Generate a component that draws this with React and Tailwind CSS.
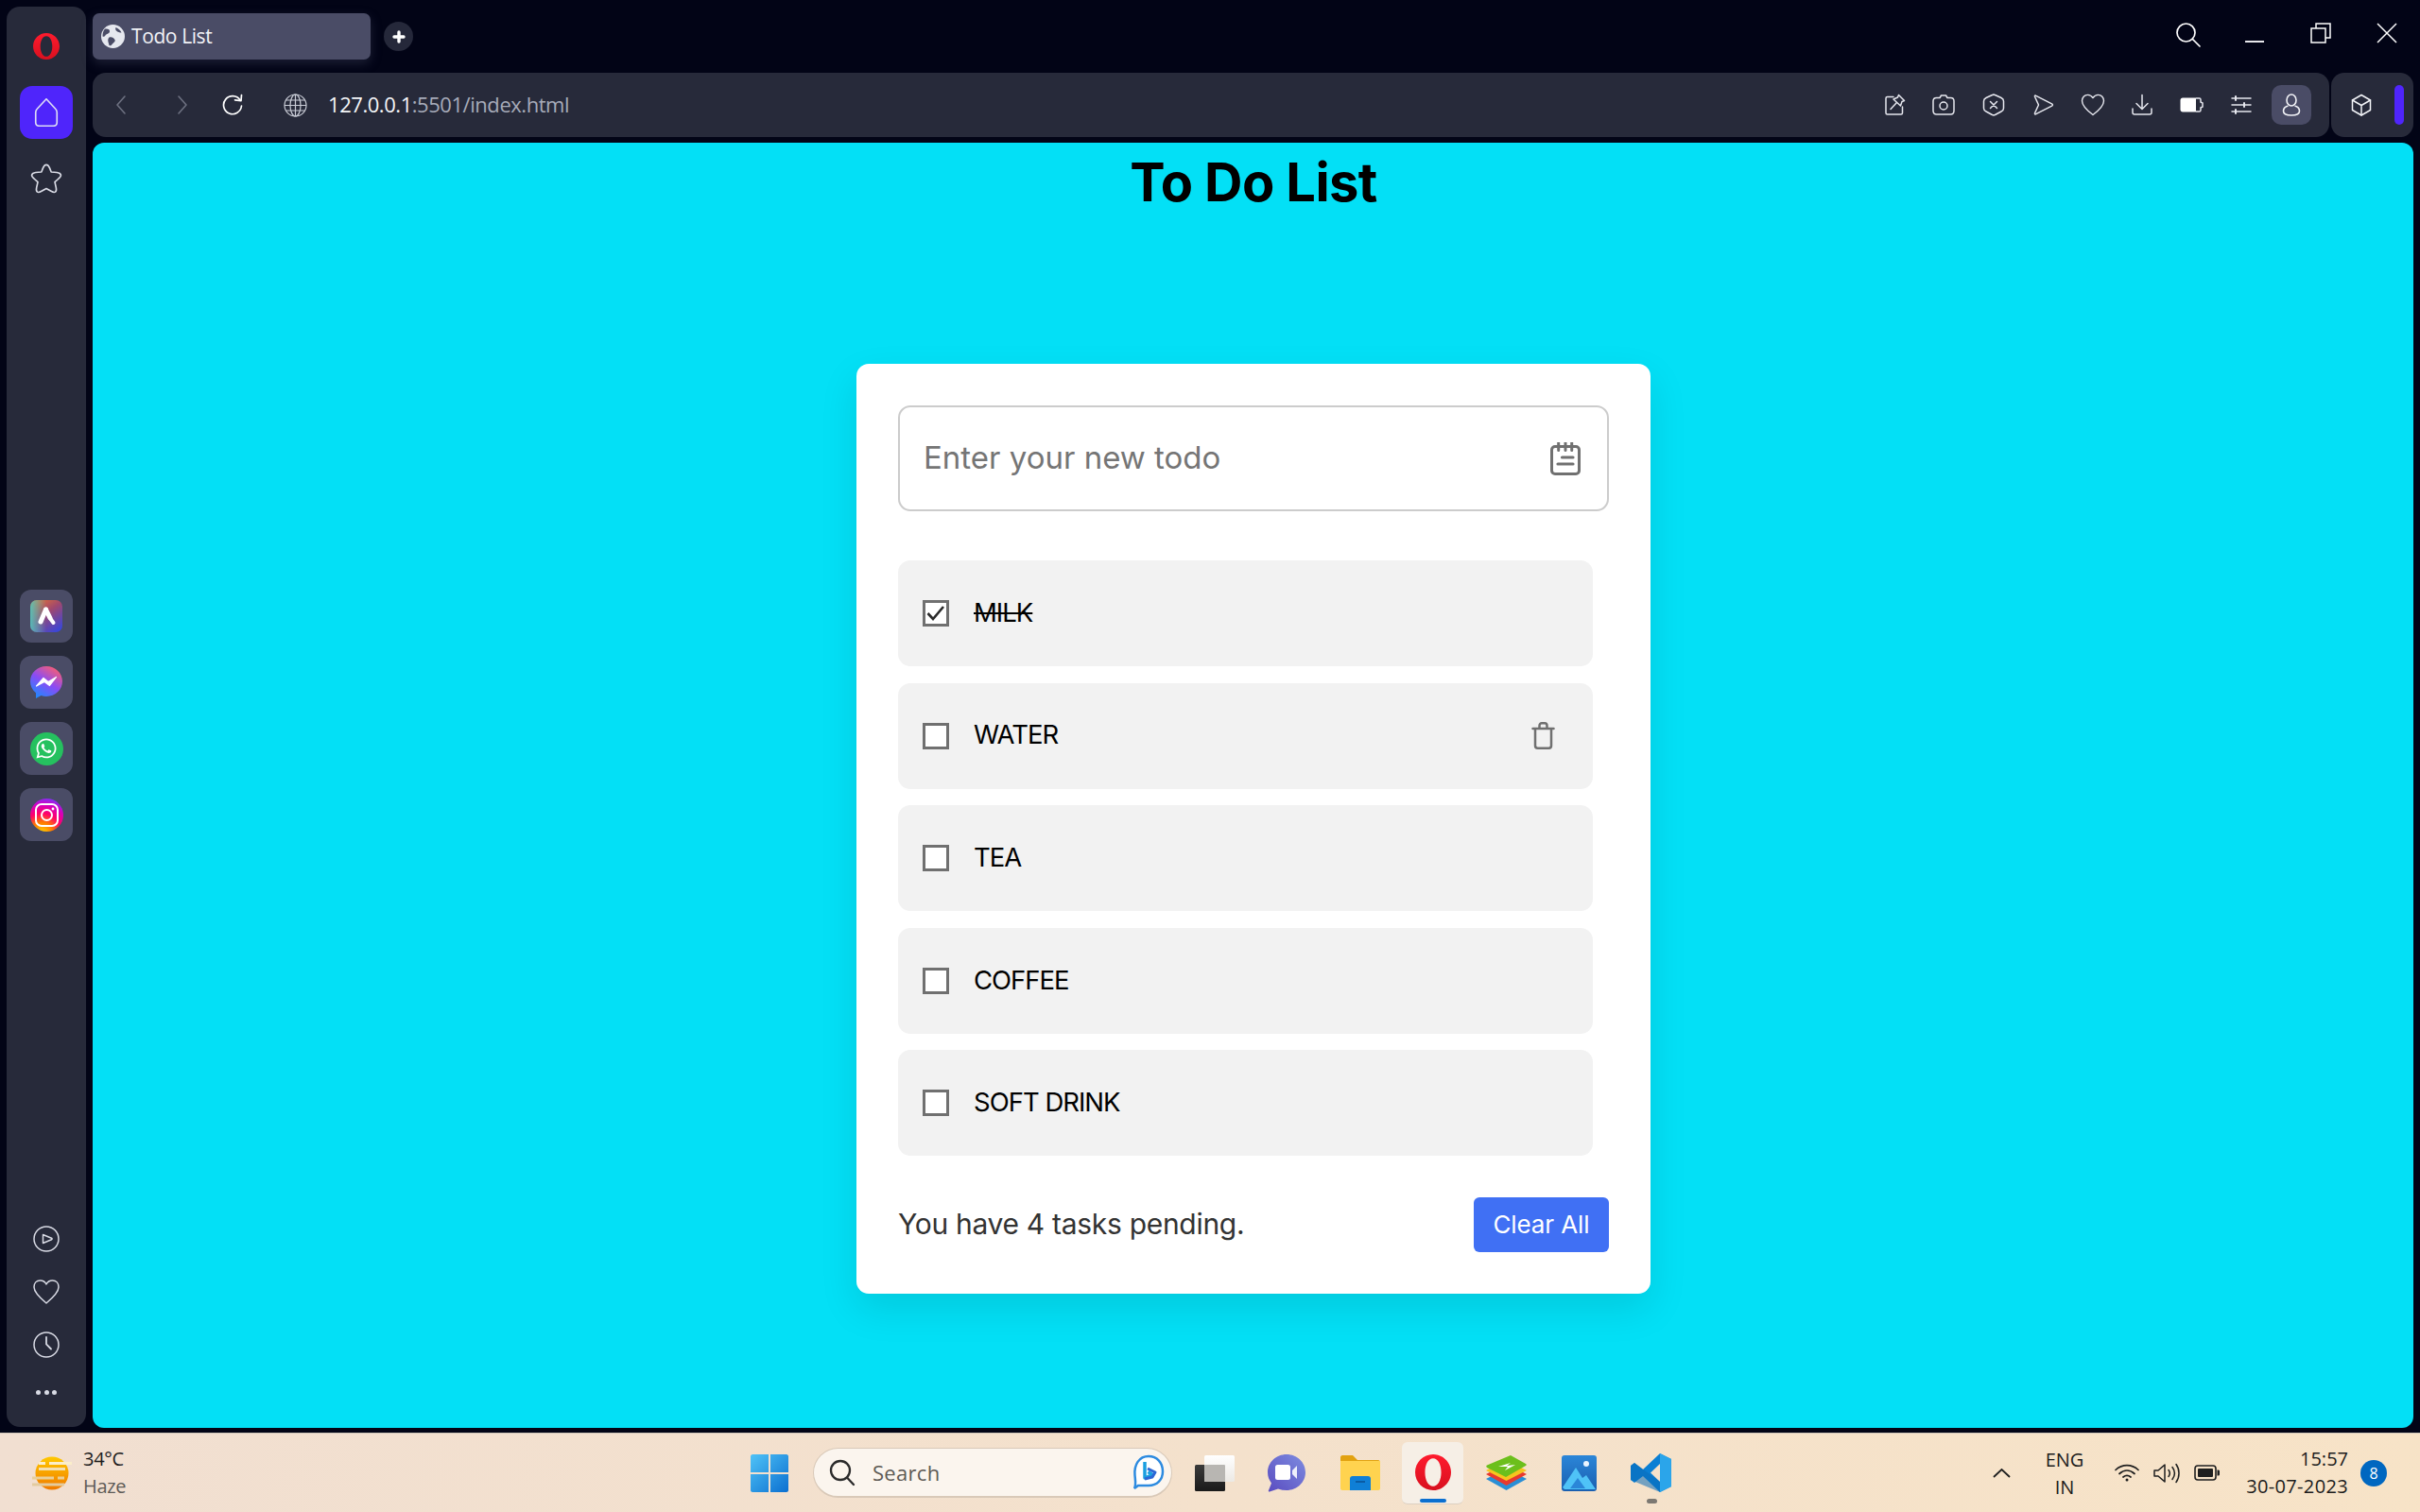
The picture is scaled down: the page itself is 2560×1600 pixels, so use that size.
import React from "react";
import { FaWhatsapp } from "react-icons/fa";

const UI = "font-['Open_Sans','Noto_Sans',sans-serif]";
const POP = "font-['Inter','Liberation_Sans',sans-serif]";

function Ic({ size = 24, w, h, vb = "0 0 24 24", sw = 1.6, color = "currentColor", fill = "none", children, className = "" }) {
  return (
    <svg width={w ?? size} height={h ?? size} viewBox={vb} fill={fill} stroke={color} strokeWidth={sw} strokeLinecap="round" strokeLinejoin="round" className={"block shrink-0 " + className}>
      {children}
    </svg>
  );
}

function OperaLogo({ w = 28, h = 28 }) {
  return (
    <svg width={w} height={h} viewBox="0 0 40 40" className="block shrink-0">
      <defs>
        <linearGradient id={`op${w}`} x1="0" y1="0" x2="0" y2="1">
          <stop offset="0" stopColor="#ff1b2d" />
          <stop offset="1" stopColor="#d8101f" />
        </linearGradient>
      </defs>
      <path fillRule="evenodd" fill={`url(#op${w})`} d="M20 0C31 0 40 9 40 20S31 40 20 40 0 31 0 20 9 0 20 0ZM20 4.500C14.500 4.500 11 11.500 11 20S14.500 35.500 20 35.500 29 28.500 29 20 25.500 4.500 20 4.500Z" />
    </svg>
  );
}

function SideTile({ children }) {
  return <div className="w-[56px] h-[56px] rounded-[12px] bg-[#4a4c66] flex items-center justify-center">{children}</div>;
}

function Sidebar() {
  return (
    <aside className="w-[84px] h-[1503px] mt-[7px] ml-[7px] shrink-0 rounded-[14px] bg-[#272a3a] flex flex-col items-center text-[#d8dae4]">
      <div className="mt-[28px]"><OperaLogo /></div>
      <div className="mt-[28px] w-[56px] h-[56px] rounded-[13px] bg-[#4f25fb] flex items-center justify-center">
        <Ic w={26} h={30} vb="4 2 16 20" sw={1.1} color="#dcdcf5">
          <path d="M12 2.500 18.500 9.500C19.300 10.300 19.500 11 19.500 12V19C19.500 20.700 18.700 21.500 17 21.500H7C5.300 21.500 4.500 20.700 4.500 19V12C4.500 11 4.700 10.300 5.500 9.500Z" />
        </Ic>
      </div>
      <div className="mt-[22px]">
        <Ic size={40} sw={1}>
          <path d="M12 3.200C13 3.200 13.600 4 14.200 5.500L15.100 7.800 18.700 8.100C20.300 8.300 21 8.800 21.200 9.600 21.400 10.400 20.900 11.100 19.800 12L17.400 14.200 18.200 17.800C18.500 19.200 18.400 20 17.700 20.500 17 21 16.200 20.700 15 20L12 18.300 9 20C7.800 20.700 7 21 6.300 20.500 5.600 20 5.500 19.200 5.800 17.800L6.600 14.200 4.200 12C3.100 11.100 2.600 10.400 2.800 9.600 3 8.800 3.700 8.300 5.300 8.100L8.900 7.800 9.800 5.500C10.400 4 11 3.200 12 3.200Z" />
        </Ic>
      </div>

      <div className="mt-[415px] flex flex-col gap-[14px]">
        <SideTile>
          <svg width="34" height="34" viewBox="0 0 34 34" className="block">
            <defs>
              <linearGradient id="ariaA" x1="0.1" y1="0" x2="0.8" y2="1">
                <stop offset="0" stopColor="#e8762f" />
                <stop offset="0.45" stopColor="#a0486e" />
                <stop offset="1" stopColor="#3a46d8" />
              </linearGradient>
              <linearGradient id="ariaB" x1="0" y1="0" x2="1" y2="0">
                <stop offset="0" stopColor="#4fc6c0" stopOpacity="0.9" />
                <stop offset="0.5" stopColor="#4fc6c0" stopOpacity="0" />
              </linearGradient>
            </defs>
            <rect width="34" height="34" rx="7" fill="url(#ariaA)" />
            <rect width="34" height="34" rx="7" fill="url(#ariaB)" />
            <path d="M16.500 10 L11 23" stroke="#fff" strokeWidth="5" fill="none" strokeLinecap="round" />
            <path d="M16.500 10 L21 19" stroke="#fff" strokeWidth="5" fill="none" strokeLinecap="round" />
            <path d="M21.500 20 L24.500 24" stroke="#fff" strokeWidth="4" fill="none" strokeLinecap="round" />
          </svg>
        </SideTile>
        <SideTile>
          <svg width="36" height="36" viewBox="0 0 36 36" className="block">
            <defs>
              <linearGradient id="msgG" x1="0.2" y1="1" x2="0.8" y2="0">
                <stop offset="0" stopColor="#1a8cff" />
                <stop offset="0.5" stopColor="#8a4bf5" />
                <stop offset="1" stopColor="#ff5f6b" />
              </linearGradient>
            </defs>
            <path fill="url(#msgG)" d="M18 1C8.600 1 1 8 1 17C1 22 3.200 26.200 7 29.200V35L12.500 32C14.300 32.600 16.100 32.900 18 32.900C27.400 32.900 35 25.900 35 17S27.400 1 18 1Z" />
            <path fill="#fff" d="M7.500 22L15 13.500 20 17.500 28.500 12.500 21.500 21.500 16 17.500Z" stroke="#fff" strokeWidth="1.200" strokeLinejoin="round" />
          </svg>
        </SideTile>
        <SideTile>
          <div className="w-[35px] h-[35px] rounded-full bg-[#25c15f] flex items-center justify-center text-white">
            <FaWhatsapp size={24} />
          </div>
        </SideTile>
        <SideTile>
          <svg width="35" height="35" viewBox="0 0 35 35" className="block">
            <defs>
              <radialGradient id="igG" cx="0.35" cy="1.05" r="1.1">
                <stop offset="0" stopColor="#ffd600" />
                <stop offset="0.3" stopColor="#ff7a00" />
                <stop offset="0.55" stopColor="#ff0169" />
                <stop offset="0.8" stopColor="#d300c5" />
                <stop offset="1" stopColor="#7638fa" />
              </radialGradient>
            </defs>
            <circle cx="17.500" cy="17.500" r="17.500" fill="url(#igG)" />
            <rect x="6" y="6" width="23" height="23" rx="6" fill="none" stroke="#fff" strokeWidth="2" />
            <circle cx="17.500" cy="17.500" r="5.500" fill="none" stroke="#fff" strokeWidth="2" />
            <circle cx="24" cy="11" r="1.400" fill="#fff" />
          </svg>
        </SideTile>
      </div>

      <div className="mt-[407px]">
        <svg width="28" height="28" viewBox="0 0 28 28" fill="none" stroke="currentColor" strokeWidth="1.500" strokeLinejoin="round" className="block">
          <circle cx="14" cy="14" r="13" />
          <path d="M10.500 9.500 19.500 13.200C20.300 13.600 20.300 14.400 19.500 14.800L10.500 18.500Z" />
        </svg>
      </div>
      <div className="mt-[29px]">
        <svg width="28" height="26" viewBox="0 0 28 26" fill="none" stroke="currentColor" strokeWidth="1.500" strokeLinejoin="round" className="block">
          <path d="M14 5C12.500 2 10 1 7.500 1 3.500 1 1 4 1 8 1 14 8 20 14 25 20 20 27 14 27 8 27 4 24.500 1 20.500 1 18 1 15.500 2 14 5Z" />
        </svg>
      </div>
      <div className="mt-[29px]">
        <svg width="28" height="28" viewBox="0 0 28 28" fill="none" stroke="currentColor" strokeWidth="1.500" strokeLinecap="round" className="block">
          <circle cx="14" cy="14" r="13" />
          <path d="M14 6V13.500L19 18.500" strokeWidth="1.800" />
        </svg>
      </div>
      <div className="mt-[34px] flex gap-[3.500px]">
        <span className="w-[5px] h-[5px] rounded-full bg-[#d8dae4]" />
        <span className="w-[5px] h-[5px] rounded-full bg-[#d8dae4]" />
        <span className="w-[5px] h-[5px] rounded-full bg-[#d8dae4]" />
      </div>
    </aside>
  );
}

function TabRow() {
  return (
    <div className="h-[77px] flex items-start">
      <div className="mt-[14px] w-[294px] h-[49px] rounded-[7px] bg-[#4a4c66] shadow-[0_4px_12px_rgba(70,72,100,0.4)] flex items-center pl-[9px]">
        <svg width="25" height="25" viewBox="0 0 25 25" className="block shrink-0">
          <circle cx="12.500" cy="12.500" r="12.500" fill="#e6e8ef" />
          <path d="M4 4.500C7 4 9.500 5 9 7.500 8.500 10 5.500 9.500 4.500 11.500 3.500 13 2.500 13 1.500 12.500 1.500 9.500 2 6.500 4 4.500Z" fill="#4a4c66" />
          <path d="M8.500 13.500C11 12.500 13.500 14 14.500 16 15.500 18 13 19 11.500 21 10.500 22.500 9.500 22.500 8.500 22 8 19 6 16 8.500 13.500Z" fill="#4a4c66" />
          <path d="M15.500 3C18 4 20.500 6 21.500 8.500 19.500 8.500 17.500 8 16 6.500 15 5.500 15 4 15.500 3Z" fill="#4a4c66" />
        </svg>
        <span className={`${UI} ml-[7px] text-[21px] leading-none text-[#f1f2f6] tracking-[-0.4px]`}>Todo List</span>
      </div>
      <div className="mt-[23px] ml-[14px] w-[31px] h-[31px] rounded-full bg-[#25283a] flex items-center justify-center">
        <svg width="14" height="14" viewBox="0 0 14 14" className="block" stroke="#fff" strokeWidth="3.400" strokeLinecap="round">
          <path d="M7 2V12M2 7H12" />
        </svg>
      </div>
      <div className="ml-auto flex text-white">
        <div className="w-[70px] h-[70px] flex justify-center pt-[23px]">
          <svg width="28" height="28" viewBox="0 0 28 28" fill="none" stroke="currentColor" strokeWidth="1.700" strokeLinecap="round" className="block">
            <circle cx="11.500" cy="11.500" r="9.500" />
            <path d="M18.500 18.500 26 26" />
          </svg>
        </div>
        <div className="w-[70px] h-[70px] flex justify-center pt-[43px]">
          <span className="block w-[20px] h-[2px] bg-[#e8e8ec]" />
        </div>
        <div className="w-[70px] h-[70px] flex justify-center pt-[24px]">
          <svg width="22" height="22" viewBox="0 0 22 22" fill="none" stroke="currentColor" strokeWidth="1.500" className="block">
            <rect x="1" y="6" width="15" height="15" />
            <path d="M6 6V1H21V16H16" />
          </svg>
        </div>
        <div className="w-[70px] h-[70px] flex justify-center pt-[24px]">
          <svg width="22" height="22" viewBox="0 0 22 22" fill="none" stroke="currentColor" strokeWidth="1.500" className="block">
            <path d="M1 1 21 21M21 1 1 21" />
          </svg>
        </div>
      </div>
    </div>
  );
}

function ToolCell({ children }) {
  return <div className="w-[52.400px] flex items-center justify-center text-[#e6e7ee]">{children}</div>;
}

function AddressRow() {
  return (
    <div className="h-[68px] flex gap-[2px]">
      <div className="w-[2366px] h-full rounded-[14px] bg-[#272a3a] flex items-center">
        <div className="ml-[24px] text-[#6d7080]">
          <svg width="12" height="24" viewBox="0 0 12 24" fill="none" stroke="currentColor" strokeWidth="1.600" strokeLinecap="round" strokeLinejoin="round" className="block"><path d="M10 3 2 12 10 21" /></svg>
        </div>
        <div className="ml-[53px] text-[#6d7080]">
          <svg width="12" height="24" viewBox="0 0 12 24" fill="none" stroke="currentColor" strokeWidth="1.600" strokeLinecap="round" strokeLinejoin="round" className="block"><path d="M2 3 10 12 2 21" /></svg>
        </div>
        <div className="ml-[36px] text-white">
          <svg width="22" height="24" viewBox="0 0 22 24" fill="none" stroke="currentColor" strokeWidth="1.700" strokeLinecap="round" strokeLinejoin="round" className="block">
            <path d="M19 7A9.500 9.500 0 1 0 20.500 13" />
            <path d="M13.500 6.800 20 7.600 20.500 1.500" />
          </svg>
        </div>
        <div className="ml-[43px] text-[#c9ccd6]">
          <svg width="25" height="25" viewBox="0 0 25 25" fill="none" stroke="currentColor" strokeWidth="1.200" className="block">
            <circle cx="12.500" cy="12.500" r="11.500" />
            <ellipse cx="12.500" cy="12.500" rx="5.500" ry="11.500" />
            <path d="M12.500 1V24M1 12.500H24M2.500 7H22.500M2.500 18H22.500" />
          </svg>
        </div>
        <div className={`${UI} ml-[22px] pb-[2px] text-[22px] leading-none tracking-[-0.45px] text-[#a6abb9]`}>
          <span className="text-[#f5f6f9]">127.0.0.1</span>:5501/index.html
        </div>
        <div className="ml-auto flex items-center">
          <ToolCell>
            <Ic size={24} sw={1.500}>
              <path d="M11 3.500H4.500C3.500 3.500 3 4 3 5V20.500C3 21.500 3.500 22 4.500 22H19C20 22 20.500 21.500 20.500 20.500V14" />
              <path d="M16.500 1.500 22.500 7.500 20 8.500 18.500 13 11 6 15.500 4ZM14.500 9.500 8 16.500" />
            </Ic>
          </ToolCell>
          <ToolCell>
            <Ic size={24} sw={1.500}>
              <path d="M8 4.500 9.500 2H14.500L16 4.500H19.500C21.500 4.500 23 6 23 8V18C23 20.500 21.500 22 19.500 22H4.500C2.500 22 1 20.500 1 18V8C1 6 2.500 4.500 4.500 4.500Z" />
              <circle cx="12" cy="13" r="4" />
            </Ic>
          </ToolCell>
          <ToolCell>
            <Ic size={24} sw={1.500}>
              <path d="M10.500 1.500C11.500 1 12.500 1 13.500 1.500L20 4.500C21.500 5.200 22.500 6 22.500 8V15.500C22.500 17.500 21.500 18.300 20 19L13.500 22.500C12.500 23 11.500 23 10.500 22.500L4 19C2.500 18.300 1.500 17.500 1.500 15.500V8C1.500 6 2.500 5.200 4 4.500Z" />
              <path d="M8.500 8.500 15.500 15.500M15.500 8.500 8.500 15.500" />
            </Ic>
          </ToolCell>
          <ToolCell>
            <Ic size={24} sw={1.500}>
              <path d="M3.500 3.200C3.200 2.300 4 1.800 4.800 2.300L21.500 10.800C22.700 11.500 22.700 12.500 21.500 13.200L4.800 21.700C4 22.200 3.200 21.700 3.500 20.800L7.500 12Z" />
            </Ic>
          </ToolCell>
          <ToolCell>
            <svg width="26" height="24" viewBox="0 0 26 26" fill="none" stroke="currentColor" strokeWidth="1.400" strokeLinejoin="round" preserveAspectRatio="none" className="block">
              <path d="M13 5C11.500 2.500 9.500 1.500 7.500 1.500 4 1.500 1.500 4.500 1.500 8.500 1.500 14.500 7.500 20 13 24.500 18.500 20 24.500 14.500 24.500 8.500 24.500 4.500 22 1.500 18.500 1.500 16.500 1.500 14.500 2.500 13 5Z" />
            </svg>
          </ToolCell>
          <ToolCell>
            <Ic size={24} sw={1.500}>
              <path d="M12 1.500V16M6 10.500 12 16.500 18 10.500" />
              <path d="M2 16V20C2 21.200 2.800 22 4 22H20C21.200 22 22 21.200 22 20V16" />
            </Ic>
          </ToolCell>
          <ToolCell>
            <svg width="25" height="16" viewBox="0 0 25 16" className="block">
              <path fill="#fff" d="M3 0.500H17V15.500H3C1.500 15.500 0.500 14.500 0.500 13V3C0.500 1.500 1.500 0.500 3 0.500Z" />
              <path fill="none" stroke="#e6e7ee" strokeWidth="1.500" d="M17 1H20.500C21.500 1 22 1.500 22 2.500V5L24 6V10L22 11V13.500C22 14.500 21.500 15 20.500 15H17" />
            </svg>
          </ToolCell>
          <ToolCell>
            <svg width="22" height="20" viewBox="0 0 22 20" fill="none" stroke="currentColor" strokeWidth="1.500" strokeLinecap="round" className="block">
              <path d="M1 3H21M1 10H21M1 17H21" />
              <path d="M5 1V5M14 8V12M5 15V19" strokeWidth="2" />
            </svg>
          </ToolCell>
          <div className="ml-[6px] mr-[19px] w-[42px] h-[42px] rounded-[10px] bg-[#4a4c66] flex items-center justify-center text-[#f2f3f7]">
            <svg width="20" height="24" viewBox="0 0 20 24" fill="none" stroke="currentColor" strokeWidth="1.600" className="block">
              <ellipse cx="10" cy="7" rx="5" ry="6" />
              <path d="M6.500 13C3 14 1.500 16 1.500 18.500 1.500 21.500 4 23 10 23S18.500 21.500 18.500 18.500C18.500 16 17 14 13.500 13" />
            </svg>
          </div>
        </div>
      </div>
      <div className="w-[87px] h-full rounded-[14px] bg-[#272a3a] flex items-center">
        <div className="ml-[20px] text-[#f2f3f7]">
          <Ic size={24} sw={1.500}>
            <path d="M12 1.500 21.500 7V17.500L12 23 2.500 17.500V7Z" />
            <path d="M2.500 7 12 12.500 21.500 7M12 12.500V23" />
          </Ic>
        </div>
        <span className="ml-[23px] block w-[10px] h-[42px] rounded-full bg-[#4f25fb]" />
      </div>
    </div>
  );
}

function Checkbox({ checked }) {
  return (
    <span className="block w-[28px] h-[28px] shrink-0 border-[3px] border-[#707070] bg-white">
      {checked && (
        <svg width="22" height="22" viewBox="0 0 22 22" fill="none" stroke="#2a2a2a" strokeWidth="2.600" className="block">
          <path d="M2.500 11 8 17 19 4" />
        </svg>
      )}
    </span>
  );
}

function Item({ label, done, trash }) {
  return (
    <li className="h-[112px] rounded-[13px] bg-[#f2f2f2] flex items-center pl-[26px] pr-[40px]">
      <Checkbox checked={done} />
      <span className={`ml-[26px] pb-[1px] text-[27.500px] leading-none text-black tracking-[-1px] ${done ? "line-through" : ""}`}>{label}</span>
      {trash && (
        <svg width="25" height="29" viewBox="0 0 25 29" fill="none" stroke="#707070" strokeWidth="2.500" strokeLinecap="round" strokeLinejoin="round" className="block ml-auto">
          <path d="M1.500 7H23.500M4 7V25C4 26.700 5 27.700 6.500 27.700H18.500C20 27.700 21 26.700 21 25V7M8.500 7V4C8.500 2.300 9.500 1.300 11 1.300H14C15.500 1.300 16.500 2.300 16.500 4V7" />
        </svg>
      )}
    </li>
  );
}

function Card() {
  return (
    <div className={`${POP} mt-[150px] w-[840px] rounded-[13px] bg-white pt-[44px] pb-[44px] pl-[44px] pr-[44px] shadow-[0_16px_40px_rgba(0,0,0,0.1)]`}>
      <div className="h-[112px] rounded-[13px] border-2 border-[#cccccc] flex items-center pl-[25px] pr-[28px]">
        <span className="pb-[2px] text-[33px] leading-none text-[#757575]">Enter your new todo</span>
        <svg width="32" height="35" viewBox="0 0 32 35" className="block ml-auto">
          <rect x="1.500" y="4.500" width="29" height="29" rx="3.500" fill="none" stroke="#707070" strokeWidth="3" />
          <path d="M8.700 0.500V8.500M16 0.500V8.500M22.700 0.500V8.500" stroke="#707070" strokeWidth="3" strokeLinecap="round" />
          <path d="M12.500 16H24M8 23H24" stroke="#707070" strokeWidth="3.200" strokeLinecap="round" />
        </svg>
      </div>
      <ul className="mt-[52px] w-[735px] flex flex-col gap-[17.600px]">
        <Item label="MILK" done />
        <Item label="WATER" trash />
        <Item label="TEA" />
        <Item label="COFFEE" />
        <Item label="SOFT DRINK" />
      </ul>
      <div className="mt-[44px] h-[58px] flex items-center justify-between">
        <span className="pb-[2px] text-[30px] leading-none text-[#333333] tracking-[-0.3px]">You have 4 tasks pending.</span>
        <button className="w-[143px] h-[58px] rounded-[6px] bg-[#4070f4] text-white text-[26px] leading-none tracking-[-0.1px]">Clear All</button>
      </div>
    </div>
  );
}

function Page() {
  return (
    <main className="mr-[7px] mt-[6px] h-[1360px] pl-[1px] rounded-[12px] bg-[#03e0f6] flex flex-col items-center overflow-hidden">
      <h1 className={`${POP} h-[84px] flex items-center text-[56px] font-bold leading-none text-black tracking-[-0.6px]`}>To Do List</h1>
      <Card />
    </main>
  );
}

function Taskbar() {
  return (
    <footer className={`${UI} h-[84px] bg-linear-to-r from-[#f1dfd1] to-[#f7e3c7] border-t border-[#cfc6ba] flex items-center`}>
      <div className="w-[794px] shrink-0 flex items-center">
        <svg width="44" height="36" viewBox="0 0 44 36" className="block ml-[33px]">
          <defs>
            <linearGradient id="sunG" x1="0" y1="0" x2="0" y2="1">
              <stop offset="0" stopColor="#ffc800" />
              <stop offset="1" stopColor="#f07a00" />
            </linearGradient>
          </defs>
          <circle cx="22" cy="18" r="17.500" fill="url(#sunG)" />
          <path d="M8 7.500H15M19 7.500H43" stroke="#fbeeca" strokeWidth="3" />
          <path d="M8 13.500H36" stroke="#f3dfb3" strokeWidth="3" />
          <path d="M1 23H24M28 23H35" stroke="#e9cf98" strokeWidth="3" />
          <path d="M1 30H35" stroke="#e3cb9f" strokeWidth="3" />
        </svg>
        <div className="ml-[11px] pb-[2px] flex flex-col gap-[6px] text-[20px] leading-[23px] tracking-[-0.3px]">
          <span className="text-[#1c1c1c]">34°C</span>
          <span className="text-[#5d5a56]">Haze</span>
        </div>
      </div>

      <svg width="40" height="40" viewBox="0 0 40 40" className="block shrink-0">
        <defs>
          <linearGradient id="winG" x1="0" y1="0" x2="1" y2="1">
            <stop offset="0" stopColor="#4fc3f7" />
            <stop offset="1" stopColor="#0b6fd0" />
          </linearGradient>
        </defs>
        <path fill="url(#winG)" d="M0 2C0 1 1 0 2 0H19V19H0ZM21 0H38C39 0 40 1 40 2V19H21ZM0 21H19V40H2C1 40 0 39 0 38ZM21 21H40V38C40 39 39 40 38 40H21Z" />
      </svg>

      <div className="ml-[26px] w-[380px] h-[53px] rounded-full bg-[#fbf5ee] border border-[#d9c9b8] border-b-2 flex items-center">
        <svg width="28" height="29" viewBox="0 0 28 29" fill="none" stroke="#2b2b2b" strokeWidth="2.300" strokeLinecap="round" className="block ml-[16px]">
          <circle cx="12" cy="12" r="10" />
          <path d="M19 19.500 26 27" />
        </svg>
        <span className="ml-[18px] text-[22px] leading-none text-[#5e5a55] tracking-[0.3px]">Search</span>
        <svg width="34" height="38" viewBox="0 0 34 38" fill="none" className="block ml-auto mr-[7px]">
          <path d="M17 2C26 2 32 9 32 18 32 27 26 33 17 33H6L2 36C4 32 3 28 2.500 22 1.500 11 7 2 17 2Z" stroke="#2d8be0" strokeWidth="2.500" fill="#fff" />
          <path d="M13 8V25L21 21.500 16.500 18.500" stroke="#1a9fe0" strokeWidth="3.500" strokeLinejoin="round" />
          <path d="M16 15 24 19 21 24 13 26" stroke="#2a66d6" strokeWidth="3" strokeLinejoin="round" />
        </svg>
      </div>

      <svg width="42" height="38" viewBox="0 0 42 38" className="block ml-[24px] shrink-0">
        <defs>
          <linearGradient id="stkD" x1="0" y1="0" x2="0" y2="1">
            <stop offset="0" stopColor="#3a3a3a" />
            <stop offset="1" stopColor="#1a1a1a" />
          </linearGradient>
          <linearGradient id="stkL" x1="0" y1="0" x2="0" y2="1">
            <stop offset="0" stopColor="#ffffff" />
            <stop offset="1" stopColor="#ece9e4" />
          </linearGradient>
        </defs>
        <rect x="0" y="10" width="32" height="28" rx="1.500" fill="url(#stkD)" />
        <rect x="10" y="0" width="32" height="28" rx="1.500" fill="url(#stkL)" />
        <rect x="10" y="10" width="22" height="18" rx="1" fill="#b8b6b2" />
      </svg>

      <svg width="40" height="40" viewBox="0 0 40 40" className="block ml-[35px] shrink-0">
        <defs>
          <linearGradient id="meetG" x1="1" y1="0" x2="0" y2="1">
            <stop offset="0" stopColor="#7d8ce0" />
            <stop offset="1" stopColor="#5a4cc0" />
          </linearGradient>
        </defs>
        <path fill="url(#meetG)" d="M20 0C31 0 40 8.500 40 19S31 38 20 38C17 38 14 37.500 11 36.500L2 39.500C1 39.700 0.500 39 1 38L4 30.500C1.500 27 0 23.500 0 19 0 8.500 9 0 20 0Z" />
        <rect x="8" y="11" width="16" height="16" rx="2.500" fill="#fff" />
        <path d="M26 17 31 12V26L26 21Z" fill="#eef0fb" />
      </svg>

      <svg width="42" height="37" viewBox="0 0 42 37" className="block ml-[37px] shrink-0">
        <path d="M0 2C0 1 1 0 2 0H13L18 5H40C41 5 42 6 42 7V12H0Z" fill="#e2a211" />
        <path d="M0 6H42V35C42 36 41 37 40 37H2C1 37 0 36 0 35Z" fill="#ffd34f" />
        <path d="M10 37V25C10 23 11 22 13 22H29C31 22 32 23 32 25V37Z" fill="#0f7fd6" />
        <path d="M16 28H26" stroke="#0a5ba3" strokeWidth="2" />
      </svg>

      <div className="relative ml-[23px] w-[65px] h-[66px] rounded-[6px] bg-[#f6efe6] border-b border-[#ddd0c0] flex items-center justify-center shrink-0">
        <OperaLogo w={38} h={40} />
        <span className="absolute bottom-[1px] left-[19px] w-[28px] h-[4px] rounded-full bg-[#0b6fd0]" />
      </div>

      <svg width="43" height="37" viewBox="0 0 43 37" className="block ml-[24px] shrink-0">
        <path d="M21.500 14 43 25 21.500 37 0 25Z" fill="#2a8fd6" />
        <path d="M21.500 9 43 20 21.500 32 0 20Z" fill="#e8392f" />
        <path d="M21.500 5 43 16 21.500 27 0 16Z" fill="#f7c51e" />
        <path d="M26 0 42 9C43 9.500 43 10.500 42 11L21 23 1 13C0 12 0 11 1 10.500Z" fill="#6cbf1c" />
        <path d="M13 12 26 8 22 11 31 10 20 16 23 12Z" fill="#fff" />
      </svg>

      <svg width="37" height="38" viewBox="0 0 37 38" className="block ml-[37px] shrink-0">
        <defs>
          <linearGradient id="phG" x1="0" y1="0" x2="0" y2="1">
            <stop offset="0" stopColor="#2b86d8" />
            <stop offset="1" stopColor="#1a5fb0" />
          </linearGradient>
        </defs>
        <rect width="37" height="38" rx="3" fill="url(#phG)" />
        <circle cx="26" cy="9" r="3" fill="#eaf4ff" />
        <path d="M1 34 15 13 22 24 26 21 36 36H3Z" fill="#4fc3f7" />
        <path d="M9 35 17 24 25 35Z" fill="#2b86d8" />
      </svg>

      <div className="relative ml-[36px] shrink-0">
        <svg width="43" height="41" viewBox="0 0 43 41" className="block">
          <path d="M31 0 43 6V35L31 41 13 24 4 31 0 28V13L4 10 13 17ZM31 11 21 20.500 31 30Z" fill="#0a7fd4" />
          <path d="M31 0 43 6V35L31 41Z" fill="#2ba5ea" />
          <path d="M0 13 4 10 31 30V41L0 28Z" fill="#0a6cb8" opacity="0.55" />
        </svg>
        <span className="absolute left-[17px] top-[48px] w-[11px] h-[5px] rounded-full bg-[#7c7872]" />
      </div>

      <div className="ml-auto mr-[35px] flex items-center">
        <svg width="19" height="10" viewBox="0 0 19 10" fill="none" stroke="#1f1f1f" strokeWidth="1.800" className="block">
          <path d="M1 9 9.500 1 18 9" />
        </svg>
        <div className="ml-[37px] w-[40px] flex flex-col items-center gap-[6px] text-[20px] leading-[23px] text-[#1c1c1c]">
          <span>ENG</span>
          <span>IN</span>
        </div>
        <svg width="26" height="19" viewBox="0 0 26 19" fill="none" stroke="#1f1f1f" strokeWidth="1.700" strokeLinecap="round" className="block ml-[33px]">
          <path d="M1 6.500C8 0 18 0 25 6.500M5 10.500C10 6 16 6 21 10.500M9 14C11.500 12 14.500 12 17 14" />
          <circle cx="13" cy="17" r="1.500" fill="#1f1f1f" stroke="none" />
        </svg>
        <svg width="28" height="22" viewBox="0 0 28 22" fill="none" stroke="#1f1f1f" strokeWidth="1.500" strokeLinejoin="round" strokeLinecap="round" className="block ml-[15px]">
          <path d="M1 8H5L12 2V20L5 14H1Z" />
          <path d="M16 7.500C17.500 9.500 17.500 12.500 16 14.500M20 4.500C23 8.500 23 13.500 20 17.500M24 1.500C28 7 28 15 24 20.500" />
        </svg>
        <svg width="27" height="17" viewBox="0 0 27 17" className="block ml-[15px]">
          <rect x="1" y="1" width="22" height="15" rx="3" fill="none" stroke="#1f1f1f" strokeWidth="1.600" />
          <rect x="4" y="4" width="16" height="9" rx="1" fill="#1f1f1f" />
          <path d="M24.500 5.500H25.500C26.300 5.500 27 6 27 7V10C27 11 26.300 11.500 25.500 11.500H24.500Z" fill="#1f1f1f" />
        </svg>
        <div className="ml-[29px] pb-[2px] w-[107px] flex flex-col items-end gap-[6px] text-[20px] leading-[23px] text-[#1c1c1c] tracking-[0.35px]">
          <span className="tracking-[0px]">15:57</span>
          <span className="whitespace-nowrap">30-07-2023</span>
        </div>
        <div className="ml-[13px] w-[28px] h-[28px] rounded-full bg-[#0067c0] flex items-center justify-center text-white text-[16px] leading-none">8</div>
      </div>
    </footer>
  );
}

export default function App() {
  return (
    <div className="w-[2560px] h-[1600px] overflow-hidden bg-[#020416] flex flex-col">
      <div className="h-[1516px] shrink-0 flex">
        <Sidebar />
        <div className="ml-[7px] flex-1 min-w-0">
          <TabRow />
          <AddressRow />
          <Page />
        </div>
      </div>
      <Taskbar />
    </div>
  );
}
